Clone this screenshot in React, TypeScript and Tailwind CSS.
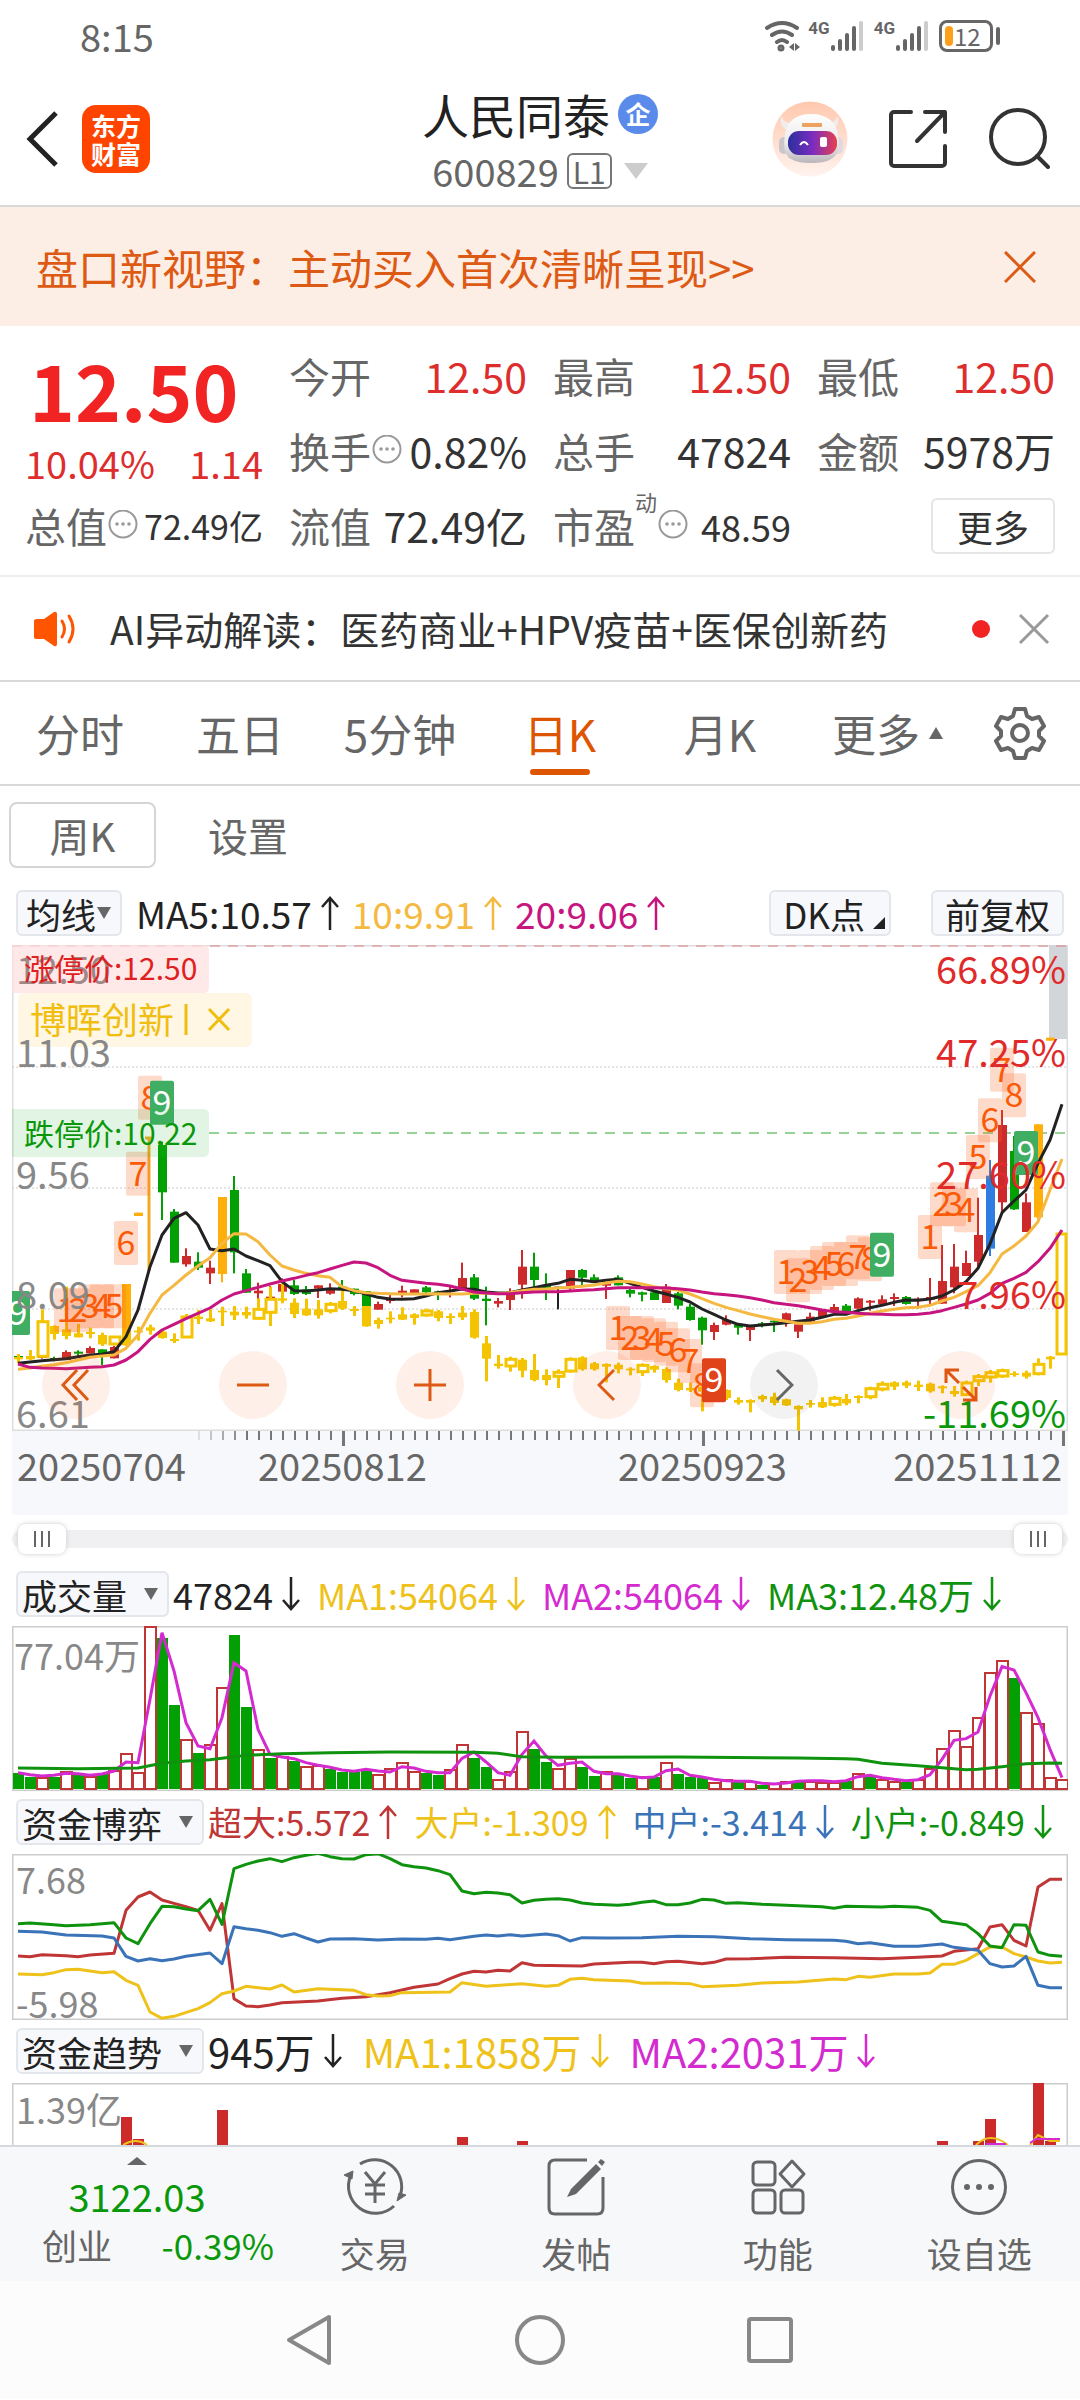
import React from "react";

const FONT = "font-['Noto_Sans_CJK_SC',sans-serif]";

// One trading day every 12 units; day 0 sits 6 units from the left edge.
const STEP = 12;
const dayX = (i: number) => 6 + i * STEP;
// Price levels are stored in thirds of a unit below the 275 line.
const levelY = (v: number) => 275 + v / 3;

const RED = "#cd2b2b";
const GREEN = "#02a002";
const ORANGE = "#ffae0a";
const BLUE = "#2f7de1";
const YELLOW = "#f5c400";

const COLORS: Record<string, string> = { r: RED, g: GREEN, o: ORANGE, b: BLUE, k: "#222222" };

// [day, colour, wick top, body top, body bottom, wick bottom]
type Candle = [number, string, number, number, number, number];

const CANDLES: Candle[] = [
  [0, "g", 403, 408, 416, 425], [2, "r", 406, 408, 414, 416], [3, "g", 410, 414, 420, 424],
  [4, "r", 391, 396, 420, 420], [5, "g", 391, 395, 401, 410], [6, "r", 379, 384, 400, 400],
  [7, "g", 388, 388, 403, 436], [8, "r", 378, 381, 415, 415], [9, "o", 192, 192, 376, 376],
  [10, "o", -22, -22, -12, -12], [12, "g", -235, -225, -83, 0], [13, "g", -33, -25, 128, 128],
  [14, "r", 85, 108, 133, 140], [15, "g", 97, 125, 143, 150], [16, "r", 122, 143, 160, 192],
  [17, "o", -69, -69, 162, 187], [18, "g", -132, -90, 97, 160], [19, "g", 147, 160, 218, 218],
  [20, "r", 188, 212, 220, 265], [21, "r", 198, 230, 245, 248], [22, "r", 175, 192, 215, 222],
  [23, "g", 180, 196, 222, 225], [24, "g", 198, 208, 222, 225], [25, "r", 196, 196, 206, 234],
  [26, "r", 190, 205, 221, 224], [27, "g", 180, 200, 206, 210], [28, "g", 206, 206, 222, 226],
  [29, "g", 213, 213, 258, 258], [30, "r", 245, 252, 269, 269], [31, "r", 225, 236, 243, 250],
  [32, "r", 197, 212, 220, 232], [33, "r", 208, 208, 222, 222], [34, "g", 198, 202, 217, 220],
  [35, "g", 212, 214, 222, 240], [36, "r", 197, 210, 216, 232], [37, "r", 128, 174, 206, 206],
  [38, "g", 162, 172, 236, 240], [39, "g", 200, 236, 243, 316], [40, "r", 234, 243, 251, 262],
  [41, "r", 205, 215, 240, 270], [42, "r", 90, 140, 194, 236], [43, "g", 98, 140, 180, 206],
  [44, "g", 160, 196, 210, 240], [45, "k", 200, 200, 203, 268], [46, "r", 150, 150, 206, 210],
  [47, "g", 147, 150, 173, 195], [48, "g", 163, 172, 182, 186], [49, "r", 188, 190, 197, 237],
  [50, "g", 166, 172, 196, 196], [51, "g", 205, 210, 221, 232], [52, "g", 215, 217, 224, 244],
  [53, "g", 215, 217, 240, 240], [54, "r", 192, 200, 249, 249], [55, "g", 216, 220, 257, 268],
  [56, "g", 252, 260, 300, 302], [57, "g", 290, 293, 331, 374], [58, "r", 308, 315, 336, 360],
  [59, "r", 286, 300, 314, 316], [60, "g", 312, 315, 323, 344], [61, "r", 318, 320, 330, 363],
  [62, "g", 306, 310, 318, 322], [63, "g", 298, 302, 307, 336], [64, "r", 278, 280, 310, 320],
  [65, "r", 308, 313, 335, 354], [66, "r", 278, 290, 305, 308], [67, "r", 270, 272, 290, 290],
  [68, "r", 252, 261, 276, 278], [69, "g", 252, 257, 275, 278], [70, "r", 232, 235, 266, 266],
  [71, "r", 240, 242, 248, 272], [72, "r", 226, 238, 252, 254], [73, "r", 220, 231, 237, 258],
  [74, "g", 228, 231, 252, 254], [75, "r", 232, 236, 242, 266], [76, "r", 174, 231, 239, 256],
  [77, "r", 75, 183, 251, 251], [78, "r", 72, 140, 202, 220], [79, "r", 92, 129, 168, 168],
  [80, "r", -67, 45, 125, 146], [81, "b", -180, -133, 86, 108], [82, "r", -330, -285, -53, -24],
  [83, "g", -252, -207, -32, -30], [84, "r", -80, -53, 36, 36], [85, "o", -288, -287, -8, 5],
  [86, "o", -547, -547, -538, -538],
];

// [day, 1 = hollow, wick top, body top, body bottom, wick bottom]
const OVERLAY: [number, number, number, number, number, number][] = [
  [0, 0, 402, 411, 418, 430], [1, 0, 390, 408, 418, 420], [2, 1, 268, 302, 412, 412],
  [3, 0, 316, 318, 342, 359], [4, 0, 200, 328, 348, 358], [5, 0, 312, 340, 352, 352],
  [6, 0, 323, 336, 342, 355], [7, 0, 338, 345, 373, 378], [8, 1, 348, 348, 375, 376],
  [9, 0, 336, 340, 372, 378], [10, 0, 320, 332, 337, 362], [11, 0, 314, 322, 332, 344],
  [12, 0, 330, 335, 354, 356], [13, 0, 340, 357, 363, 369], [14, 1, 282, 288, 354, 354],
  [15, 0, 270, 290, 297, 312], [16, 0, 268, 295, 304, 306], [17, 0, 260, 272, 277, 318],
  [18, 0, 258, 275, 286, 300], [19, 0, 260, 276, 286, 296], [20, 1, 235, 265, 298, 298],
  [21, 1, 200, 235, 280, 318], [22, 0, 186, 235, 242, 250], [23, 0, 235, 248, 282, 294],
  [24, 0, 236, 266, 286, 288], [25, 0, 240, 268, 286, 296], [26, 1, 246, 250, 275, 280],
  [27, 0, 210, 243, 266, 270], [28, 0, 258, 267, 273, 288], [29, 0, 258, 258, 319, 320],
  [30, 0, 293, 300, 312, 326], [31, 0, 274, 293, 298, 310], [32, 0, 262, 283, 299, 300],
  [33, 0, 280, 283, 294, 314], [34, 1, 266, 270, 288, 290], [35, 0, 270, 274, 294, 304],
  [36, 0, 280, 288, 294, 312], [37, 0, 258, 278, 292, 300], [38, 0, 268, 276, 353, 356],
  [39, 0, 348, 370, 416, 484], [40, 0, 405, 431, 438, 446], [41, 1, 410, 415, 441, 455],
  [42, 0, 414, 419, 452, 472], [43, 0, 402, 450, 480, 484], [44, 0, 448, 465, 480, 496],
  [45, 1, 448, 454, 472, 504], [46, 1, 412, 415, 456, 458], [47, 0, 409, 412, 448, 452],
  [48, 0, 426, 430, 448, 452], [49, 0, 430, 432, 440, 487], [50, 0, 428, 434, 448, 460],
  [51, 0, 442, 446, 451, 466], [52, 1, 430, 433, 458, 468], [53, 0, 436, 438, 449, 458],
  [54, 0, 442, 447, 480, 488], [55, 0, 476, 488, 510, 514], [56, 0, 488, 504, 511, 516],
  [57, 0, 495, 500, 515, 574], [58, 0, 508, 512, 530, 534], [59, 0, 508, 510, 534, 540],
  [60, 0, 532, 540, 548, 554], [61, 0, 538, 540, 548, 577], [62, 0, 524, 528, 538, 546],
  [63, 0, 518, 530, 549, 556], [64, 0, 536, 538, 556, 558], [65, 0, 556, 558, 568, 632],
  [66, 0, 540, 549, 554, 563], [67, 0, 532, 546, 562, 564], [68, 1, 528, 532, 556, 560],
  [69, 0, 522, 537, 550, 556], [70, 0, 526, 528, 534, 550], [71, 1, 500, 503, 533, 538],
  [72, 1, 484, 490, 510, 514], [73, 0, 484, 487, 500, 510], [74, 0, 482, 487, 497, 504],
  [75, 0, 482, 494, 501, 513], [76, 0, 488, 491, 514, 518], [77, 0, 496, 499, 505, 520],
  [78, 0, 498, 513, 522, 530], [79, 1, 482, 486, 527, 528], [80, 1, 462, 467, 485, 498],
  [81, 1, 450, 455, 474, 488], [82, 1, 446, 449, 471, 474], [83, 0, 454, 460, 465, 470],
  [84, 0, 452, 458, 470, 476], [85, 1, 415, 430, 464, 466], [86, 0, 408, 410, 418, 446],
];

const MA5 = [
  430, 426, 422, 419, 416, 410, 405, 403, 395, 350, 270, 140, 45, -5, -22, 15, 87, 92, 87, 108, 122, 137,
  185, 212, 213, 210, 206, 208, 212, 222, 232, 237, 238, 236, 228, 218, 213, 207, 208, 216, 219, 218, 210,
  203, 196, 190, 178, 181, 185, 181, 178, 190, 202, 213, 222, 232, 246, 267, 283, 300, 313, 318, 315, 312,
  308, 304, 300, 292, 283, 283, 272, 263, 256, 247, 240, 241, 237, 228, 210, 185, 145, 72, -22, -57, -90,
  -170, -240, -347,
];
const MA10 = [
  448, 444, 438, 434, 428, 420, 412, 408, 405, 385, 345, 280, 225, 196, 165, 138, 113, 70, 41, 42, 65, 105,
  138, 150, 160, 167, 172, 200, 212, 218, 220, 221, 222, 222, 222, 221, 222, 222, 220, 220, 221, 218, 212,
  208, 207, 204, 202, 199, 195, 189, 184, 185, 192, 200, 206, 210, 222, 236, 250, 262, 272, 282, 290, 298,
  304, 310, 310, 305, 298, 295, 288, 280, 273, 268, 263, 262, 256, 243, 232, 215, 197, 158, 102, 78, 48, 5,
  -90, -183,
];
const MA20 = [
  432, 442, 444, 445, 446, 444, 442, 440, 435, 420, 395, 358, 330, 313, 296, 280, 264, 240, 222, 212, 202,
  192, 183, 175, 166, 158, 147, 136, 126, 129, 143, 166, 181, 185, 190, 193, 198, 207, 216, 219, 221, 221,
  218, 216, 215, 215, 213, 211, 209, 206, 203, 203, 203, 203, 204, 206, 210, 216, 221, 224, 228, 233, 240,
  248, 253, 257, 263, 270, 275, 277, 280, 282, 283, 284, 284, 283, 279, 272, 262, 252, 240, 220, 190, 175,
  157, 125, 85, 30,
];

// Sequence marks: [day, top level, digit, style]
const MARKS: [number, number, string, string][] = [
  [4, 205, "1", "n"], [5, 205, "2", "n"], [6, 193, "3", "n"], [7, 193, "4", "n"], [8, 193, "5", "n"],
  [9, 3, "6", "n"], [10, -205, "7", "n"], [11, -433, "8", "n"], [12, -418, "9", "g"], [0, 213, "9", "g"],
  [50, 258, "1", "n"], [51, 288, "2", "n"], [52, 288, "3", "n"], [53, 295, "4", "n"], [54, 305, "5", "n"],
  [55, 325, "6", "n"], [56, 357, "7", "n"], [57, 430, "8", "n"], [58, 415, "9", "r"],
  [64, 90, "1", "n"], [65, 115, "2", "n"], [66, 90, "3", "n"], [67, 78, "4", "n"], [68, 66, "5", "n"],
  [69, 66, "6", "n"], [70, 46, "7", "n"], [71, 52, "8", "n"], [72, 38, "9", "g"],
  [76, -15, "1", "n"], [77, -113, "2", "n"], [78, -113, "3", "n"], [79, -95, "4", "n"],
  [80, -255, "5", "n"], [81, -365, "6", "n"], [82, -517, "7", "n"], [83, -440, "8", "n"], [84, -267, "9", "g"],
];

const VOLUMES = [
  16, 12, 12, 12, 18, 14, 13, 15, 19, 36, 17, 163, 151, 84, 50, 36, 45, 102, 154, 82, 40, 31, 33, 28, 23, 24,
  20, 17, 17, 20, 15, 21, 27, 18, 16, 14, 20, 45, 31, 22, 10, 18, 58, 40, 27, 21, 31, 22, 13, 18, 14, 11, 13,
  12, 27, 15, 12, 11, 7, 10, 7, 8, 4, 6, 8, 7, 8, 7, 7, 8, 16, 12, 10, 8, 7, 10, 21, 41, 59, 43, 72, 117, 129,
  111, 77, 66, 12, 10,
];
const UP_DAYS = [
  2, 4, 6, 8, 9, 10, 11, 14, 16, 17, 20, 22, 24, 25, 30, 31, 32, 33, 36, 37, 40, 41, 42, 45, 46, 49, 52, 54,
  58, 59, 61, 63, 64, 66, 67, 68, 70, 72, 73, 75, 76, 77, 78, 79, 80, 81, 82, 84, 85, 86, 87,
];
const VOL_MA = [
  640, 646, 650, 648, 642, 643, 648, 644, 635, 608, 610, 420, 220, 335, 490, 560, 568, 475, 310, 335, 510,
  585, 593, 598, 610, 618, 624, 632, 636, 630, 635, 638, 622, 626, 636, 640, 640, 597, 578, 608, 640, 648,
  585, 545, 590, 618, 612, 608, 636, 643, 643, 650, 655, 653, 634, 629, 648, 653, 660, 664, 666, 666, 672,
  674, 671, 666, 664, 664, 667, 664, 652, 648, 655, 660, 664, 661, 646, 600, 543, 538, 518, 410, 322, 332,
  400, 475, 570, 655,
];

type Pair = [number, number];

const VOL_MA_LONG: Pair[] = [
  [0, 626], [5, 628], [10, 626], [12, 612], [14, 605], [16, 601], [17, 597], [19, 588], [22, 583], [26, 580],
  [31, 578], [38, 579], [40, 582], [42, 592], [45, 594], [55, 593], [65, 596], [69, 598], [70, 600], [72, 612],
  [75, 619], [77, 625], [79, 631], [80, 630], [82, 622], [84, 613], [86, 611], [87, 612],
];

const SMALL: Pair[] = [
  [0, 255], [1, 253], [3, 258], [4, 261], [6, 258], [8, 252], [9, 298], [10, 315], [11, 255], [12, 203],
  [13, 204], [14, 211], [15, 216], [16, 182], [17, 257], [18, 90], [19, 77], [20, 67], [21, 60], [22, 69],
  [23, 57], [24, 50], [25, 44], [26, 54], [27, 60], [28, 61], [29, 48], [30, 45], [31, 60], [32, 78], [33, 84],
  [34, 88], [35, 96], [36, 108], [37, 157], [38, 165], [39, 161], [40, 163], [41, 168], [42, 193], [43, 185],
  [44, 182], [45, 180], [46, 184], [47, 193], [48, 197], [50, 200], [51, 197], [52, 191], [53, 187], [54, 198],
  [55, 198], [56, 193], [57, 182], [58, 184], [59, 194], [60, 192], [62, 197], [64, 200], [66, 203], [67, 204],
  [68, 209], [69, 203], [72, 205], [73, 203], [75, 206], [76, 215], [77, 248], [78, 253], [79, 258], [80, 285],
  [81, 322], [82, 327], [83, 258], [84, 260], [85, 340], [86, 350], [87, 353],
];
const SUPER: Pair[] = [
  [0, 352], [1, 354], [2, 348], [4, 351], [5, 354], [6, 349], [8, 344], [9, 215], [10, 175], [11, 160],
  [12, 184], [13, 194], [14, 204], [15, 215], [16, 275], [17, 195], [18, 480], [19, 502], [20, 504], [21, 499],
  [22, 492], [25, 487], [27, 479], [29, 474], [31, 462], [33, 446], [35, 436], [36, 420], [37, 406], [38, 398],
  [39, 400], [40, 395], [41, 397], [42, 372], [43, 380], [47, 382], [48, 376], [51, 371], [52, 371], [53, 375],
  [54, 369], [55, 368], [57, 375], [58, 371], [59, 361], [61, 360], [64, 356], [68, 357], [72, 360], [75, 356],
  [77, 352], [78, 338], [80, 330], [81, 265], [82, 258], [83, 305], [84, 322], [85, 145], [86, 122], [87, 122],
];
const LARGE: Pair[] = [
  [0, 406], [2, 408], [3, 402], [4, 393], [5, 392], [7, 402], [8, 399], [9, 425], [10, 440], [11, 520],
  [12, 539], [13, 533], [15, 510], [16, 492], [17, 465], [18, 457], [19, 443], [21, 451], [22, 439], [23, 460],
  [25, 450], [28, 455], [29, 468], [30, 472], [31, 471], [32, 462], [36, 460], [37, 432], [39, 443], [42, 435],
  [44, 443], [45, 440], [46, 422], [47, 419], [48, 423], [51, 427], [52, 434], [54, 433], [56, 435], [57, 444],
  [60, 440], [62, 433], [65, 430], [68, 421], [69, 423], [70, 413], [71, 416], [73, 406], [75, 406], [76, 403],
  [77, 377], [78, 377], [79, 365], [80, 345], [81, 325], [82, 325], [83, 345], [84, 355], [85, 367], [86, 373],
  [87, 371],
];
const MEDIUM: Pair[] = [
  [0, 278], [2, 280], [4, 289], [7, 292], [8, 298], [9, 353], [10, 367], [11, 360], [12, 366], [13, 361],
  [14, 353], [16, 343], [17, 375], [18, 264], [19, 270], [20, 275], [21, 282], [22, 293], [23, 285], [24, 298],
  [25, 310], [26, 301], [28, 300], [30, 304], [32, 301], [34, 302], [35, 299], [36, 303], [38, 293], [39, 289],
  [40, 292], [41, 288], [42, 292], [44, 286], [45, 291], [46, 307], [47, 297], [49, 298], [52, 297], [55, 293],
  [58, 294], [61, 300], [64, 303], [68, 305], [69, 308], [70, 315], [71, 312], [73, 323], [75, 323], [77, 316],
  [78, 326], [80, 335], [81, 375], [82, 385], [83, 382], [84, 353], [85, 440], [86, 447], [87, 447],
];

const FLOW_BARS: Pair[] = [
  [9, 28], [10, 6], [17, 35], [37, 8], [42, 4], [77, 4], [80, 4], [81, 26], [85, 62], [86, 4],
];

const levels = (list: number[]) => list.map((v, i) => `${dayX(i)},${levelY(v)}`).join(" ");
const volLine = (list: Pair[]) => list.map(([i, v]) => `${dayX(i)},${(v - 200) / 3}`).join(" ");
const fundLine = (list: Pair[]) => list.map(([i, v]) => `${dayX(i)},${(v - 46) / 3}`).join(" ");

function Arrow({ up = false }: { up?: boolean }) {
  return (
    <svg className={up ? "ml-2 h-9 w-5" : "ml-2 h-9 w-5 rotate-180"} viewBox="0 0 20 36" fill="none" stroke="currentColor" strokeWidth="2.5">
      <path d="M10 35V3M2 12l8-9 8 9" />
    </svg>
  );
}

function Down() {
  return (
    <svg className="h-3 w-4" viewBox="0 0 16 12" fill="#666">
      <path d="M1 0h14L8 12z" />
    </svg>
  );
}

function InfoDot() {
  return (
    <svg className="h-8 w-8 shrink-0" viewBox="0 0 32 32" fill="none" stroke="#999" strokeWidth="2">
      <circle cx="16" cy="14" r="13.5" />
      <g fill="#999" stroke="none">
        <circle cx="10" cy="14" r="1.8" />
        <circle cx="16" cy="14" r="1.8" />
        <circle cx="22" cy="14" r="1.8" />
      </g>
    </svg>
  );
}

function Signal() {
  return (
    <div className="flex items-start">
      <span className="text-[17px] leading-none font-bold font-['Roboto',sans-serif]">4G</span>
      <svg className="h-8 w-9" viewBox="0 0 36 32" fill="#666">
        <rect x="1" y="25" width="4" height="6" rx="2" />
        <rect x="8" y="19" width="4" height="12" rx="2" />
        <rect x="15" y="13" width="4" height="18" rx="2" />
        <rect x="22" y="6" width="4" height="25" rx="2" />
        <rect x="29" y="1" width="4" height="30" rx="2" fill="#ccc" />
      </svg>
    </div>
  );
}

function StatusBar() {
  return (
    <div className="flex h-[72px] items-center justify-between pr-20 pl-20 text-[#666]">
      <span className="text-[38px] leading-none">8:15</span>
      <div className="flex items-center gap-2">
        <svg className="h-8 w-9" viewBox="0 0 36 32" fill="none" stroke="#666" strokeWidth="4" strokeLinecap="round">
          <path d="M3 8q15-10 30 0M8 15q10-7 20 0M13 22q5-4 10 0" />
          <circle cx="17" cy="28" r="1.5" />
          <path d="M30 23v8l-5-4zM31 23v8l5-4z" fill="#666" strokeWidth="0" />
        </svg>
        <Signal />
        <Signal />
        <div className="flex items-center gap-[3px]">
          <div className="flex h-8 w-[54px] items-center gap-px rounded-lg border-3 border-[#666] pl-[3px]">
            <span className="h-5 w-2 rounded-sm bg-[#ff9f1a]" />
            <span className="text-[24px] leading-none">12</span>
          </div>
          <span className="h-[18px] w-1 rounded bg-[#666]" />
        </div>
      </div>
    </div>
  );
}

function Robot() {
  return (
    <svg className="h-19 w-19" viewBox="0 0 76 76">
      <defs>
        <linearGradient id="halo" x1="0" y1="0" x2="0" y2="1">
          <stop offset="0" stopColor="#ffc8ae" />
          <stop offset="1" stopColor="#fff3ee" />
        </linearGradient>
        <linearGradient id="head" x1="0" y1="0" x2="0" y2="1">
          <stop offset="0" stopColor="#ffffff" />
          <stop offset="0.6" stopColor="#ece9ea" />
          <stop offset="1" stopColor="#b9b5bb" />
        </linearGradient>
        <linearGradient id="visor" x1="0" y1="0" x2="1" y2="0">
          <stop offset="0" stopColor="#2b2f9c" />
          <stop offset="0.5" stopColor="#7a2cc0" />
          <stop offset="1" stopColor="#e8404e" />
        </linearGradient>
      </defs>
      <circle cx="38" cy="38" r="37.5" fill="url(#halo)" />
      <path d="M15 29c-6-3-8-9-5-14 1 5 4 7 10 7zM60 29c6-3 8-9 5-14-1 5-4 7-10 7z" fill="#f1ecec" />
      <rect x="7" y="36" width="10" height="17" rx="5" fill="#c9c5ca" />
      <rect x="61" y="36" width="10" height="17" rx="5" fill="#dedadd" />
      <path d="M39 13c-16 0-24 8-26 20-2 14 0 22 6 25 5 3 12 4 20 4s16-1 20-4c7-3 9-11 7-25-2-12-11-20-27-20z" fill="url(#head)" />
      <rect x="30" y="22" width="20" height="4" rx="1" fill="#eda35f" />
      <rect x="16" y="30" width="49" height="24" rx="11" fill="url(#visor)" />
      <path d="M28 44q4-6 8 0" fill="none" stroke="#fff" strokeWidth="2" />
      <rect x="48" y="36" width="7" height="10" rx="2" fill="#fff" />
    </svg>
  );
}

function Header() {
  return (
    <header className="grid h-[135px] grid-cols-[1fr_auto_1fr] items-center border-b-2 border-[#d9d9d9] px-[26px]">
      <div className="flex items-center gap-6">
        <button aria-label="返回">
          <svg className="h-14 w-8" viewBox="0 0 32 56" fill="none" stroke="#222" strokeWidth="5">
            <path d="M30 2L4 28l26 26" />
          </svg>
        </button>
        <a href="#home" className="flex h-[68px] w-[68px] flex-col items-center justify-center rounded-[14px] bg-[#ff4400] text-[25px] leading-[28px] font-bold text-white">
          <span>东方</span>
          <span>财富</span>
        </a>
      </div>
      <div className="flex flex-col items-center pt-1">
        <h1 className="flex h-[60px] items-center gap-2 text-[47px] leading-none text-[#222]">
          人民同泰
          <span className="flex h-10 w-10 items-center justify-center rounded-full bg-[#5b8bea] text-[25px] font-bold text-white">企</span>
        </h1>
        <button className="flex h-[54px] items-center gap-2 text-[38px] leading-none text-[#666]">
          600829
          <span className="rounded-md border-2 border-[#777] px-1 text-[30px] leading-[32px]">L1</span>
          <svg className="ml-1 h-4 w-6" viewBox="0 0 24 16" fill="#ccc">
            <path d="M0 0h24L12 16z" />
          </svg>
        </button>
      </div>
      <div className="flex items-center justify-end gap-10 pr-1">
        <button aria-label="智能助手"><Robot /></button>
        <button aria-label="分享">
          <svg className="h-[60px] w-[60px]" viewBox="0 0 60 60" fill="none" stroke="#333" strokeWidth="4" strokeLinecap="round" strokeLinejoin="round">
            <path d="M23 3H6a3 3 0 0 0-3 3v48a3 3 0 0 0 3 3h48a3 3 0 0 0 3-3V37M37 3h20v20M56 4L29 32" />
          </svg>
        </button>
        <button aria-label="搜索">
          <svg className="h-16 w-[62px]" viewBox="0 0 62 64" fill="none" stroke="#333" strokeWidth="4" strokeLinecap="round">
            <circle cx="30" cy="30" r="27" />
            <path d="M49 49l11 11" />
          </svg>
        </button>
      </div>
    </header>
  );
}

function Stat({ label, value, tone = "text-[#333]", info = false }: { label: string; value: string; tone?: string; info?: boolean }) {
  return (
    <div className="flex h-[75px] items-center justify-between">
      <span className="flex items-center text-[#666]">
        {label}
        {info && <InfoDot />}
      </span>
      <span className={tone}>{value}</span>
    </div>
  );
}

function Quote() {
  return (
    <section className="grid grid-cols-4 gap-[26px] border-b-2 border-[#eee] px-[25px] py-3 text-[41px] leading-none whitespace-nowrap">
      <div>
        <p className="flex h-[100px] items-center pl-1 text-[78px] font-bold text-[#f22323]">12.50</p>
        <p className="flex h-[50px] items-center justify-between text-[38px] text-[#dd2d2d]">
          <span>10.04%</span>
          <span>1.14</span>
        </p>
        <Stat label="总值" value="72.49亿" info tone="text-[34px] text-[#333]" />
      </div>
      <div>
        <Stat label="今开" value="12.50" tone="text-[#dd2d2d]" />
        <Stat label="换手" value="0.82%" info />
        <Stat label="流值" value="72.49亿" />
      </div>
      <div>
        <Stat label="最高" value="12.50" tone="text-[#dd2d2d]" />
        <Stat label="总手" value="47824" />
        <div className="flex h-[75px] items-center justify-between">
          <span className="flex items-center text-[#666]">
            市盈
            <sup className="mb-7 text-[22px] leading-none">动</sup>
            <InfoDot />
          </span>
          <span className="text-[36px] text-[#333]">48.59</span>
        </div>
      </div>
      <div>
        <Stat label="最低" value="12.50" tone="text-[#dd2d2d]" />
        <Stat label="金额" value="5978万" />
        <div className="flex h-[75px] items-center justify-end">
          <button className="h-[56px] w-[124px] rounded-md border-2 border-[#e5e5e5] text-[36px] text-[#333]">更多</button>
        </div>
      </div>
    </section>
  );
}

function News() {
  return (
    <section className="flex h-[105px] items-center border-b-2 border-[#d9d9d9] px-[30px] text-[#333]">
      <svg className="h-9 w-[50px]" viewBox="0 0 50 36">
        <path d="M4 10q0-2 3-2h7L24 1q3-1 3 2v30q0 3-3 2l-10-7H7q-3 0-3-2z" fill="#ff5500" />
        <path d="M32 10q5 8 0 16M39 5q8 13 0 26" fill="none" stroke="#ff5500" strokeWidth="3" strokeLinecap="round" />
      </svg>
      <a href="#news" className="ml-[30px] grow text-[39px] leading-none whitespace-nowrap">AI异动解读：医药商业+HPV疫苗+医保创新药</a>
      <span className="h-[18px] w-[18px] rounded-full bg-[#f22323]" />
      <button aria-label="关闭" className="ml-7">
        <svg className="h-8 w-8" viewBox="0 0 32 32" stroke="#999" strokeWidth="3">
          <path d="M2 2l28 28M30 2L2 30" />
        </svg>
      </button>
    </section>
  );
}

const TABS = ["分时", "五日", "5分钟", "日K", "月K"];

function Tabs() {
  return (
    <nav className="grid h-[104px] grid-cols-[repeat(6,1fr)_120px] items-center justify-items-center border-b-2 border-[#d9d9d9] text-[44px] leading-none text-[#666]">
      {TABS.map((tab) => (
        <button key={tab} className={tab === "日K" ? "relative text-[#dd5500]" : "relative"}>
          {tab}
          {tab === "日K" && <span className="absolute -bottom-5 left-1/2 h-[6px] w-[60px] -translate-x-1/2 rounded-full bg-[#dd5500]" />}
        </button>
      ))}
      <button className="ml-4 flex items-center gap-2">
        更多
        <svg className="h-3 w-4" viewBox="0 0 16 12" fill="#666">
          <path d="M1 12h14L8 0z" />
        </svg>
      </button>
      <button aria-label="设置">
        <svg className="h-[54px] w-[52px]" viewBox="0 0 52 54" fill="none" stroke="#666" strokeWidth="4" strokeLinejoin="round">
          <path d="M21 3h10l2 7 5 3 7-2 5 9-5 5v5l5 5-5 9-7-2-5 3-2 7H21l-2-7-5-3-7 2-5-9 5-5v-5l-5-5 5-9 7 2 5-3z" />
          <circle cx="26" cy="27" r="8" />
        </svg>
      </button>
    </nav>
  );
}

const PILL = "flex h-[46px] shrink-0 items-center rounded-md border-2 border-[#e3e6ea] bg-[#f6f8fb] text-[35px] text-[#222]";

type Reading = { text: string; tone: string; up?: boolean };

function IndicatorRow({ name, size, readings }: { name: string; size: string; readings: Reading[] }) {
  return (
    <div className="mt-2 flex h-[46px] items-center pl-4 leading-none whitespace-nowrap">
      <button className={`${PILL} gap-4 pr-2 pl-1`}>
        {name}
        <Down />
      </button>
      <div className={`ml-1 flex ${size}`}>
        {readings.map((r) => (
          <span key={r.text} className={`flex items-center ${r.tone}`}>
            {r.text}
            <Arrow up={r.up} />
          </span>
        ))}
      </div>
    </div>
  );
}

function Label({ y, text, end = false, fill = "#888" }: { y: number; text: string; end?: boolean; fill?: string }) {
  return (
    <text x={end ? 1054 : 4} y={y} textAnchor={end ? "end" : "start"} fontSize="38" fill={fill}>
      {text}
    </text>
  );
}

function Mark({ day, top, digit, kind }: { day: number; top: number; digit: string; kind: string }) {
  const solid = kind !== "n";
  const fill = kind === "g" ? "#3fae63" : kind === "r" ? "#e0421a" : "#fa6420";
  return (
    <g>
      <rect x={dayX(day) - 12} y={levelY(top)} width="24" height="44" rx="2" fill={fill} fillOpacity={solid ? 1 : 0.24} />
      <text x={dayX(day)} y={levelY(top) + 34} textAnchor="middle" fontSize="34" fill={solid ? "#fff" : "#fa5a05"}>
        {digit}
      </text>
    </g>
  );
}

const ROUND = "flex h-[68px] w-[68px] items-center justify-center rounded-full bg-[#fa6420]/10";

function PriceChart() {
  return (
    <div className="relative mx-3 mt-[9px]">
      <svg className="block h-auto w-full" viewBox="0 0 1056 486">
        <rect x="0.5" y="0.5" width="1055" height="485" fill="none" stroke="#ddd" strokeWidth="2" />
        {[122, 243, 364].map((y) => (
          <path key={y} d={`M0 ${y}H1056`} stroke="#ccc" strokeDasharray="2 2" />
        ))}
        <rect x="1037" y="0" width="18" height="94" fill="#d2d5da" />
        <path d="M0 1H1056" stroke="#d98080" strokeWidth="1" strokeDasharray="10 8" />
        <path d="M197 188H1056" stroke="#2fa62f" strokeWidth="1" strokeDasharray="10 8" />
        <path d="M137 192V326M133 193h8" stroke="#f0ac20" strokeWidth="3" />
        {CANDLES.map(([i, c, hi, top, bottom, lo]) => (
          <g key={i} fill={COLORS[c]}>
            <rect x={dayX(i) - 1} y={levelY(hi)} width="2" height={(lo - hi) / 3} />
            <rect x={dayX(i) - 4} y={levelY(top)} width="9" height={(bottom - top) / 3} />
          </g>
        ))}
        {OVERLAY.map(([i, hollow, hi, top, bottom, lo]) => (
          <g key={i} fill={YELLOW}>
            <rect x={dayX(i) - 1} y={levelY(hi)} width="3" height={(lo - hi) / 3} />
            {hollow ? (
              <rect x={dayX(i) - 4} y={levelY(top) + 1} width="10" height={(bottom - top) / 3 - 2} fill="#fff" stroke={YELLOW} strokeWidth="3" />
            ) : (
              <rect x={dayX(i) - 4} y={levelY(top)} width="9" height={(bottom - top) / 3} />
            )}
          </g>
        ))}
        <rect x="1045" y="289" width="9" height="120" fill="#fff" stroke={YELLOW} strokeWidth="3" />
        {MARKS.map(([day, top, digit, kind]) => (
          <Mark key={`${day}-${digit}`} day={day} top={top} digit={digit} kind={kind} />
        ))}
        <g fill="none" strokeWidth="3" strokeLinejoin="round">
          <polyline points={levels(MA5)} stroke="#222" />
          <polyline points={levels(MA10)} stroke="#f5b942" />
          <polyline points={levels(MA20)} stroke="#c7157f" />
        </g>
        <path d="M0 0h191q6 0 6 6v36q0 6-6 6H0z" fill="#ffe0e0" fillOpacity="0.75" />
        <Label y={39} text="12.50" fill="#a08888" />
        <text x="12" y="35" fontSize="30" fill="#e02020">涨停价:12.50</text>
        <rect x="6" y="48" width="234" height="54" rx="6" fill="#fff5dc" fillOpacity="0.8" />
        <text x="18" y="89" fontSize="36" fill="#f0be10">博晖创新</text>
        <path d="M174 59v31M197 64l20 21M217 64l-20 21" stroke="#f0be10" strokeWidth="3" />
        <path d="M0 164h191q6 0 6 6v36q0 6-6 6H0z" fill="#2fae3f" fillOpacity="0.14" />
        <text x="12" y="200" fontSize="30" fill="#0a980a">跌停价:10.22</text>
        <Label y={122} text="11.03" />
        <Label y={244} text="9.56" />
        <Label y={364} text="8.09" />
        <Label y={483} text="6.61" />
        <Label y={39} text="66.89%" end fill="#e02a2a" />
        <Label y={122} text="47.25%" end fill="#e02a2a" />
        <Label y={244} text="27.60%" end fill="#e02a2a" />
        <Label y={364} text="7.96%" end fill="#e02a2a" />
        <Label y={483} text="-11.69%" end fill="#0a980a" />
      </svg>
      <div className="absolute right-[73px] bottom-3 left-[30px] flex justify-between">
        <button aria-label="最早" className={ROUND}>
          <svg className="h-9 w-8" viewBox="0 0 32 36" fill="none" stroke="#dd5a14" strokeWidth="3">
            <path d="M17 3L3 18l14 15M28 3L14 18l14 15" />
          </svg>
        </button>
        <button aria-label="缩小" className={ROUND}>
          <svg className="h-9 w-9" viewBox="0 0 36 36" stroke="#dd5a14" strokeWidth="3">
            <path d="M2 18h32" />
          </svg>
        </button>
        <button aria-label="放大" className={ROUND}>
          <svg className="h-9 w-9" viewBox="0 0 36 36" stroke="#dd5a14" strokeWidth="3">
            <path d="M2 18h32M18 2v32" />
          </svg>
        </button>
        <button aria-label="向前" className={ROUND}>
          <svg className="h-9 w-5" viewBox="0 0 20 36" fill="none" stroke="#dd5a14" strokeWidth="3">
            <path d="M17 3L2 18l15 15" />
          </svg>
        </button>
        <button aria-label="向后" className="flex h-[68px] w-[68px] items-center justify-center rounded-full bg-black/5">
          <svg className="h-9 w-5" viewBox="0 0 20 36" fill="none" stroke="#666" strokeWidth="3">
            <path d="M3 3l15 15L3 33" />
          </svg>
        </button>
        <button aria-label="全屏" className={ROUND}>
          <svg className="h-9 w-9" viewBox="0 0 36 36" fill="none" stroke="#e05510" strokeWidth="3">
            <path d="M3 16V3h13M3 3l13 13M20 33h13V20M20 20l13 13" />
          </svg>
        </button>
      </div>
    </div>
  );
}

function TimeAxis() {
  const ticks = Array.from({ length: 73 }, (_, n) => n + 15);
  return (
    <svg className="mx-3 block h-auto w-[calc(100%-24px)] bg-[#f7f8fb]" viewBox="0 0 1056 84">
      {ticks.map((i) => {
        const tall = i === 27 || i === 57 || i === 87;
        return <rect key={i} x={dayX(i)} y="0" width={tall ? 3 : 2} height={tall ? 15 : 9} fill="#777" fillOpacity={Math.min(1, (i - 14) / 5)} />;
      })}
      <g fontSize="38" fill="#666">
        <text x="5" y="50">20250704</text>
        <text x="246" y="50">20250812</text>
        <text x="606" y="50">20250923</text>
        <text x="1050" y="50" textAnchor="end">20251112</text>
      </g>
    </svg>
  );
}

const RANGE =
  "pointer-events-none mx-[6px] appearance-none bg-transparent [grid-area:1/1] [&::-webkit-slider-thumb]:pointer-events-auto [&::-webkit-slider-thumb]:h-[30px] [&::-webkit-slider-thumb]:w-12 [&::-webkit-slider-thumb]:appearance-none [&::-webkit-slider-thumb]:rounded-lg [&::-webkit-slider-thumb]:bg-white [&::-webkit-slider-thumb]:bg-[linear-gradient(90deg,#666_2px,transparent_2px,transparent_7px,#666_7px,#666_9px,transparent_9px,transparent_14px,#666_14px)] [&::-webkit-slider-thumb]:bg-[length:16px_16px] [&::-webkit-slider-thumb]:bg-center [&::-webkit-slider-thumb]:bg-no-repeat [&::-webkit-slider-thumb]:shadow-[0_0_5px_#ccc]";

function RangeBar() {
  return (
    <div className="mx-3 grid h-[48px] items-center">
      <div className="h-[18px] rounded-full bg-[#f0f0f2] [grid-area:1/1]" />
      <input type="range" aria-label="开始日期" defaultValue={0} className={RANGE} />
      <input type="range" aria-label="结束日期" defaultValue={100} className={RANGE} />
    </div>
  );
}

function VolumeChart() {
  return (
    <svg className="mx-3 mt-[9px] block h-auto w-[calc(100%-24px)]" viewBox="0 0 1056 165">
      <rect x="0.5" y="0.5" width="1055" height="164" fill="none" stroke="#ccc" strokeWidth="2" />
      <text x="2" y="44" fontSize="36" fill="#888">77.04万</text>
      {VOLUMES.map((h, i) =>
        UP_DAYS.includes(i) ? (
          <rect key={i} x={dayX(i) - 5} y={164 - h} width="11" height={h - 1} fill="#fff" stroke="#c03535" strokeWidth="2" />
        ) : (
          <rect key={i} x={dayX(i) - 5} y={163 - h} width="11" height={h} fill={GREEN} />
        )
      )}
      <polyline points={volLine(VOL_MA.map((v, i) => [i, v]))} fill="none" stroke="#d42bd0" strokeWidth="3" />
      <polyline points={volLine(VOL_MA_LONG)} fill="none" stroke="#0f930f" strokeWidth="3" />
    </svg>
  );
}

function FundChart() {
  return (
    <svg className="mx-3 mt-[9px] block h-auto w-[calc(100%-24px)]" viewBox="0 0 1056 166">
      <rect x="0.5" y="0.5" width="1055" height="165" fill="none" stroke="#ccc" strokeWidth="2" />
      <g fontSize="36" fill="#888">
        <text x="4" y="40">7.68</text>
        <text x="4" y="164">-5.98</text>
      </g>
      <g fill="none" strokeWidth="3" strokeLinejoin="round">
        <polyline points={fundLine(SUPER)} stroke="#c03535" />
        <polyline points={fundLine(LARGE)} stroke="#eec21a" />
        <polyline points={fundLine(MEDIUM)} stroke="#3a73b8" />
        <polyline points={fundLine(SMALL)} stroke="#0f930f" />
      </g>
    </svg>
  );
}

function FlowChart() {
  return (
    <svg className="mx-3 mt-[9px] block h-auto w-[calc(100%-24px)]" viewBox="0 0 1056 62">
      <path d="M0.5 62V0.5H1055.5V62" fill="none" stroke="#ccc" strokeWidth="2" />
      <text x="4" y="41" fontSize="36" fill="#888">1.39亿</text>
      {FLOW_BARS.map(([i, h]) => (
        <rect key={i} x={dayX(i) - 5} y={62 - h} width="11" height={h} fill={RED} />
      ))}
      <g fill="none" strokeWidth="2">
        <path d="M111 62q13-8 24 0M964 62q14-14 32 0M1018 62l8-10 12 6h10" stroke="#eec21a" />
        <path d="M974 61h20M1018 60l6-4h24" stroke="#d42bd0" />
      </g>
    </svg>
  );
}

const ICON = "h-[60px] w-[64px]";

const ACTIONS = [
  {
    label: "交易",
    icon: (
      <svg className={ICON} viewBox="0 0 64 60" fill="none" stroke="#666" strokeWidth="3">
        <path d="M17 7A27 27 0 0 1 57 39M51 49A27 27 0 0 1 8 18" />
        <path d="M1 18l9-4-1 8zM63 38l-9 6 2-8z" fill="#666" strokeWidth="1" />
        <path d="M22 15l10 12 10-12M32 27v19M22 28h20M22 37h20" />
      </svg>
    ),
  },
  {
    label: "发帖",
    icon: (
      <svg className={ICON} viewBox="0 0 64 60" fill="none" stroke="#666" strokeWidth="3">
        <path d="M43 3H11q-6 0-6 6v42q0 6 6 6h42q6 0 6-6V20" />
        <path d="M52 7l5 5-25 25-9 3 4-8zM54 5l3-3 4 3-3 4z" fill="#666" stroke="none" />
      </svg>
    ),
  },
  {
    label: "功能",
    icon: (
      <svg className={ICON} viewBox="0 0 64 60" fill="none" stroke="#666" strokeWidth="3" strokeLinejoin="round">
        <rect x="7" y="5" width="22" height="23" rx="4" />
        <rect x="7" y="33" width="22" height="23" rx="4" />
        <rect x="35" y="33" width="22" height="23" rx="4" />
        <path d="M46 4l12 13-12 13-12-13z" />
      </svg>
    ),
  },
  {
    label: "设自选",
    icon: (
      <svg className={ICON} viewBox="0 0 64 60" fill="none" stroke="#666" strokeWidth="3">
        <circle cx="32" cy="30" r="26.5" />
        <g fill="#666" stroke="none">
          <circle cx="20" cy="30" r="3" />
          <circle cx="32" cy="30" r="3" />
          <circle cx="44" cy="30" r="3" />
        </g>
      </svg>
    ),
  },
];

function BottomBar() {
  return (
    <footer>
      <div className="flex h-[136px] border-t-2 border-[#d5d8dc] bg-[#f6f8fa] leading-none text-[#666]">
        <button className="flex w-[274px] flex-col items-center pt-[10px]">
          <svg className="h-2 w-5" viewBox="0 0 20 8" fill="#666">
            <path d="M0 8h20L10 0z" />
          </svg>
          <span className="mt-3 text-[38px] text-[#0a980a]">3122.03</span>
          <span className="mt-3 flex w-[232px] items-center justify-between self-end text-[35px]">
            创业
            <span className="text-[#0a980a]">-0.39%</span>
          </span>
        </button>
        {ACTIONS.map((a) => (
          <button key={a.label} className="flex flex-1 flex-col items-center gap-[18px] pt-[10px] text-[35px]">
            {a.icon}
            {a.label}
          </button>
        ))}
      </div>
      <div className="flex h-[118px] items-center justify-center gap-[176px] bg-[#fcfcfc]">
        <button aria-label="后退">
          <svg className="h-[54px] w-[54px]" viewBox="0 0 54 54" fill="none" stroke="#888" strokeWidth="4" strokeLinejoin="round">
            <path d="M46 4v46L6 27z" />
          </svg>
        </button>
        <button aria-label="主屏幕">
          <svg className="h-[54px] w-[54px]" viewBox="0 0 54 54" fill="none" stroke="#888" strokeWidth="4">
            <circle cx="27" cy="27" r="23" />
          </svg>
        </button>
        <button aria-label="最近任务">
          <svg className="h-[54px] w-[54px]" viewBox="0 0 54 54" fill="none" stroke="#888" strokeWidth="4">
            <rect x="6" y="6" width="42" height="42" rx="2" />
          </svg>
        </button>
      </div>
    </footer>
  );
}

export default function App() {
  return (
    <div className={`w-full overflow-hidden bg-white ${FONT}`}>
      <StatusBar />
      <Header />
      <div className="flex h-[119px] items-center justify-between bg-[#fdeee5] pr-[44px] pl-9 text-[#dd5a14]">
        <a href="#vision" className="text-[42px] leading-none whitespace-nowrap">盘口新视野：主动买入首次清晰呈现&gt;&gt;</a>
        <button aria-label="关闭">
          <svg className="h-8 w-8" viewBox="0 0 32 32" stroke="currentColor" strokeWidth="3">
            <path d="M1 1l30 30M31 1L1 31" />
          </svg>
        </button>
      </div>
      <Quote />
      <News />
      <Tabs />
      <main>
        <div className="flex gap-[52px] px-[9px] pt-4 text-[40px] leading-none text-[#666]">
          <button className="h-[66px] w-[147px] rounded-lg border-2 border-[#d5d5d5]">周K</button>
          <button className="h-[66px]">设置</button>
        </div>
        <div className="mt-[22px] flex h-[46px] items-center pr-4 pl-4 text-[37px] leading-none whitespace-nowrap">
          <button className={`${PILL} px-2`}>
            均线
            <Down />
          </button>
          <div className="ml-[14px] flex grow gap-3">
            <span className="flex items-center text-[#222]">MA5:10.57<Arrow up /></span>
            <span className="flex items-center text-[#f5b942]">10:9.91<Arrow up /></span>
            <span className="flex items-center text-[#c7157f]">20:9.06<Arrow up /></span>
          </div>
          <button className={`${PILL} gap-2 pr-1 pl-3`}>
            DK点
            <svg className="mt-5 h-3 w-3" viewBox="0 0 12 12" fill="#222">
              <path d="M12 0v12H0z" />
            </svg>
          </button>
          <button className={`${PILL} ml-10 px-3`}>前复权</button>
        </div>
        <PriceChart />
        <TimeAxis />
        <RangeBar />
        <IndicatorRow
          name="成交量"
          size="gap-4 text-[36px]"
          readings={[
            { text: "47824", tone: "text-[#222]" },
            { text: "MA1:54064", tone: "text-[#eec21a]" },
            { text: "MA2:54064", tone: "text-[#d42bd0]" },
            { text: "MA3:12.48万", tone: "text-[#0f930f]" },
          ]}
        />
        <VolumeChart />
        <IndicatorRow
          name="资金博弈"
          size="gap-4 text-[34px]"
          readings={[
            { text: "超大:5.572", tone: "text-[#c03535]", up: true },
            { text: "大户:-1.309", tone: "text-[#eec21a]", up: true },
            { text: "中户:-3.414", tone: "text-[#3a73b8]" },
            { text: "小户:-0.849", tone: "text-[#0f930f]" },
          ]}
        />
        <FundChart />
        <IndicatorRow
          name="资金趋势"
          size="gap-5 text-[40px]"
          readings={[
            { text: "945万", tone: "text-[#222]" },
            { text: "MA1:1858万", tone: "text-[#eec21a]" },
            { text: "MA2:2031万", tone: "text-[#d42bd0]" },
          ]}
        />
        <FlowChart />
      </main>
      <BottomBar />
    </div>
  );
}
